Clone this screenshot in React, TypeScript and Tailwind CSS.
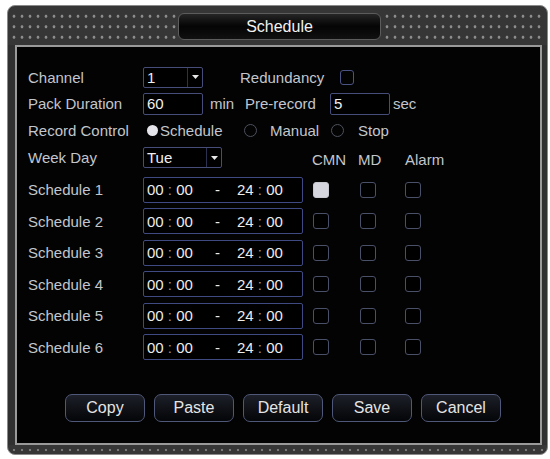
function Caret() {
  return (
    <svg width="7" height="4" viewBox="0 0 7 4">
      <polygon points="0,0 7,0 3.5,4" fill="#e6e6e6" />
    </svg>
  );
}

function Select({ value, wide }: { value: string; wide?: boolean }) {
  return (
    <div
      className={`flex h-[21px] items-center rounded-[2px] border-[1.5px] border-[#454d78] bg-black ${
        wide ? "w-[79px]" : "w-[60px]"
      }`}
    >
      <span className="flex-1 pl-[3px] text-[15px] leading-none text-[#f0f0f0]">{value}</span>
      <span className="flex h-full w-[15px] items-center justify-center border-l border-[#2c3150]">
        <Caret />
      </span>
    </div>
  );
}

function Field({ value }: { value: string }) {
  return (
    <div className="flex h-[22px] w-[60px] items-center rounded-[2px] border-[1.5px] border-[#454d78] bg-black pl-[3px] text-[15px] leading-none text-[#f0f0f0]">
      {value}
    </div>
  );
}

function Check({ on }: { on?: boolean }) {
  return (
    <span
      className={`block h-[16px] w-[16px] rounded-[3px] border-[1.5px] ${
        on ? "border-[#c8c8d0] bg-[#d6d6de]" : "border-[#4a5068] bg-black"
      }`}
    />
  );
}

function Label({ children }: { children: string }) {
  return <span className="w-[115px] shrink-0 text-[15px] leading-none text-[#c2c6cc]">{children}</span>;
}

function Time() {
  return (
    <div className="flex h-[26px] w-[160px] items-center rounded-[2px] border-[1.5px] border-[#3f4a82] bg-black pl-[3px] text-[15px] leading-none text-[#ececec]">
      <span className="w-[68px]">
        00 <span className="text-[#9d9a88]">:</span> 00
      </span>
      <span className="w-[22px]">-</span>
      <span>
        24 <span className="text-[#9d9a88]">:</span> 00
      </span>
    </div>
  );
}

export default function App() {
  const dots = "bg-[radial-gradient(circle,#8c8c8c_1.1px,transparent_1.8px)] bg-[length:8px_10.5px]";
  const buttons = ["Copy", "Paste", "Default", "Save", "Cancel"];
  const schedules = [1, 2, 3, 4, 5, 6];

  return (
    <div className="min-h-screen bg-white pl-[7px] pt-[5px] font-['Liberation_Sans',Arial,sans-serif]">
      <div className="flex h-[450px] w-[541px] flex-col overflow-hidden rounded-[8px] border border-[#8a8a8a] bg-[#363636]">
        {/* Title band */}
        <div className="flex h-[39px] shrink-0 items-start">
          <div className={`ml-[2px] mt-[5px] h-[31px] w-[166px] ${dots}`} />
          <div className="ml-[2px] mt-[7px] flex h-[27px] w-[203px] items-center justify-center rounded-[6px] border border-[#5c5c5c] bg-linear-to-b from-[#262626] via-[#050505] to-[#111] text-[16px] leading-none text-[#f2f2f2]">
            Schedule
          </div>
          <div className={`ml-[2px] mr-[2px] mt-[5px] h-[31px] flex-1 ${dots}`} />
        </div>

        {/* Body */}
        <div className="flex h-[400px] shrink-0">
          <div className="w-[7px] shrink-0 bg-[#303030]" />
          <div className="flex w-[527px] shrink-0 flex-col border-2 border-[#9a9a9a] bg-[#030303] pl-[11px] pt-[17px]">
            <div className="flex h-[26px] items-center">
              <Label>Channel</Label>
              <Select value="1" />
              <span className="ml-[37px] w-[100px] text-[15px] leading-none text-[#c2c6cc]">Redundancy</span>
              <span className="block h-[15px] w-[14px] rounded-[3px] border-[1.5px] border-[#4b5385]" />
            </div>

            <div className="flex h-[27px] items-center">
              <Label>Pack Duration</Label>
              <Field value="60" />
              <span className="ml-[7px] w-[35px] text-[15px] leading-none text-[#c2c6cc]">min</span>
              <span className="w-[85px] text-[15px] leading-none text-[#c2c6cc]">Pre-record</span>
              <Field value="5" />
              <span className="ml-[3px] text-[15px] leading-none text-[#c2c6cc]">sec</span>
            </div>

            <div className="flex h-[27px] items-center text-[15px] leading-none text-[#c2c6cc]">
              <Label>Record Control</Label>
              <span className="flex w-[17px] items-center pl-[4px]">
                <span className="block h-[11px] w-[11px] rounded-full bg-[#e4e4ea]" />
              </span>
              <span className="w-[83px]">Schedule</span>
              <span className="flex w-[27px] items-center pl-[1px]">
                <span className="block h-[13px] w-[13px] rounded-full border border-[#4e525e]" />
              </span>
              <span className="w-[61px]">Manual</span>
              <span className="flex w-[27px] items-center">
                <span className="block h-[13px] w-[13px] rounded-full border border-[#4e525e]" />
              </span>
              <span>Stop</span>
            </div>

            <div className="flex h-[27px] items-center text-[15px] leading-none text-[#c2c6cc]">
              <Label>Week Day</Label>
              <Select value="Tue" wide />
              <span className="ml-[90px] w-[46px] pt-[3px]">CMN</span>
              <span className="w-[47px] pt-[3px]">MD</span>
              <span className="pt-[3px]">Alarm</span>
            </div>

            <div className="mt-[3px] flex flex-col">
              {schedules.map((n) => (
                <div key={n} className="flex h-[31.5px] items-center">
                  <Label>{`Schedule ${n}`}</Label>
                  <Time />
                  <span className="ml-[10px]">
                    <Check on={n === 1} />
                  </span>
                  <span className="ml-[31px]">
                    <Check />
                  </span>
                  <span className="ml-[29px]">
                    <Check />
                  </span>
                </div>
              ))}
            </div>

            <div className="ml-[37px] mt-[31px] flex gap-[9px]">
              {buttons.map((b) => (
                <button
                  key={b}
                  className="flex h-[28px] w-[80px] items-center justify-center rounded-[7px] border-[1.5px] border-[#4f5878] bg-linear-to-b from-[#1d2029] to-[#050608] text-[16px] leading-none text-[#e4e4e4]"
                >
                  {b}
                </button>
              ))}
            </div>
          </div>
          <div className="w-[5px] shrink-0 bg-[#303030]" />
        </div>

        {/* Bottom band */}
        <div className={`mx-[2px] mt-[1px] h-[8px] bg-[length:8px_8px] bg-[radial-gradient(circle,#7a7a7a_1px,transparent_1.6px)]`} />
      </div>
    </div>
  );
}
